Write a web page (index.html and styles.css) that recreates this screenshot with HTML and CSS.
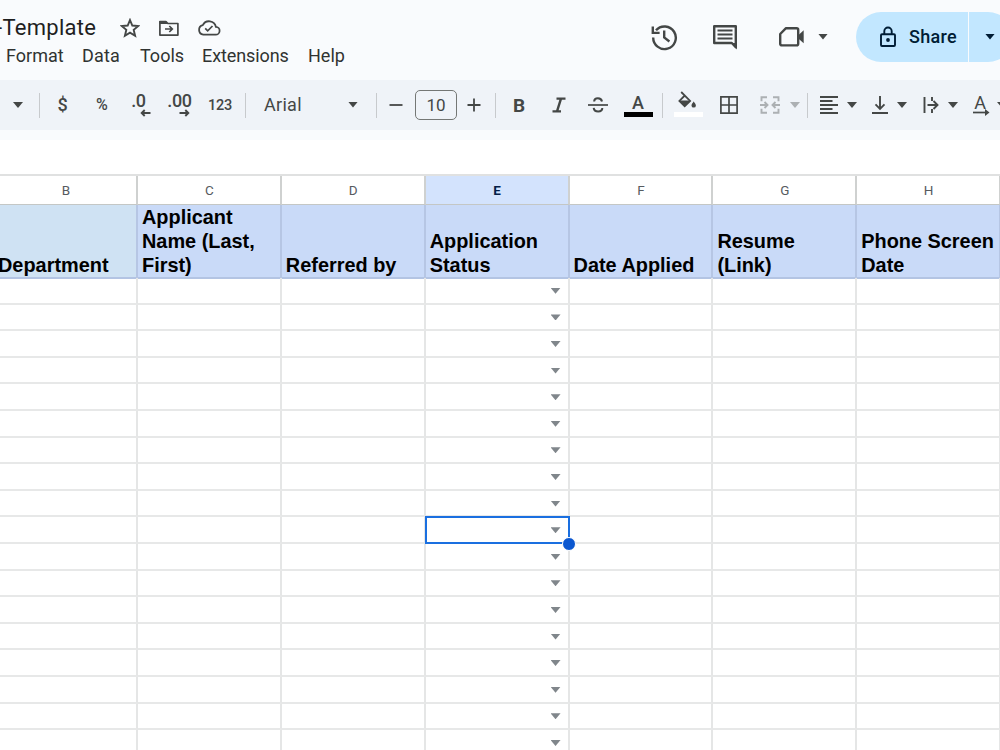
FILE: index.html
```html
<!DOCTYPE html>
<html lang="en">
<head>
<meta charset="utf-8">
<title>Template</title>
<link rel="stylesheet" href="styles.css">
</head>
<body>
<header class="top">
  <div class="doc">
    <div class="title-row">
      <span class="title">-Template</span>
      <svg class="ic star" width="20" height="20" viewBox="0 0 20 20"><path d="M10 2l2.300 5.500 6 .5-4.600 3.900 1.400 5.800L10 14.600l-5.100 3.100 1.400-5.800L1.700 8l6-.5z" fill="none" stroke="#444746" stroke-width="1.900"/></svg>
      <svg class="ic folder" width="22" height="18" viewBox="0 0 22 18"><path d="M1.900 2.500h6l2 2h10v11.600h-18z" fill="none" stroke="#444746" stroke-width="1.700" stroke-linejoin="round"/><path d="M1.500 2h6.500l2 3H1.500z" fill="#444746"/><path d="M7 10h7M11.300 7l3 3-3 3" fill="none" stroke="#444746" stroke-width="1.700"/></svg>
      <svg class="ic cloud" width="24" height="18" viewBox="0 0 24 18"><path d="M6.300 15.700h12.200a3.900 3.900 0 0 0 .4-7.800A7 7 0 0 0 5.800 6.100a4.900 4.900 0 0 0 .5 9.600z" fill="none" stroke="#444746" stroke-width="1.800"/><path d="M8.200 9.300l2.500 2.500 4.800-4.800" fill="none" stroke="#444746" stroke-width="1.700"/></svg>
    </div>
    <nav class="menu"><span class="m-format">Format</span><span class="m-data">Data</span><span class="m-tools">Tools</span><span class="m-ext">Extensions</span><span class="m-help">Help</span></nav>
  </div>
  <div class="actions">
    <svg class="history" width="28" height="28" viewBox="0 0 28 28"><path d="M3.200 14.500A11.300 11.300 0 1 0 6 7.300" fill="none" stroke="#444746" stroke-width="2.400"/><path d="M2.800 3.500v6.400h6.800" fill="none" stroke="#444746" stroke-width="2.400"/><path d="M14.200 7.500v7l5.200 4" fill="none" stroke="#444746" stroke-width="2.400"/></svg>
    <svg class="comment" width="28" height="28" viewBox="0 0 28 28"><path d="M3.200 3.200h21.600v21l-4-4.200H3.200z" fill="none" stroke="#444746" stroke-width="2.400" stroke-linejoin="round"/><path d="M20 20h5.900v6.500z" fill="#444746"/><path d="M6.500 7.500h15M6.500 11.500h15M6.500 15.500h15" stroke="#444746" stroke-width="2.200"/></svg>
    <svg class="video" width="28" height="24" viewBox="0 0 28 24"><path d="M8 3.200h10.600q1.600 0 1.600 1.600v14q0 1.600-1.600 1.600H4q-1.800 0-1.800-1.600V9z" fill="none" stroke="#444746" stroke-width="2.400" stroke-linejoin="round"/><path d="M20 10.500l5.700-5.200v13L20 13.200z" fill="#444746"/></svg>
    <i class="arrow v-arrow"></i>
    <div class="share">
      <div class="share-main">
        <svg width="18" height="22" viewBox="0 0 18 22"><rect x="2" y="8.300" width="14" height="11.700" rx="1" fill="none" stroke="#001d35" stroke-width="1.900"/><path d="M5.300 8V5.200a3.700 3.700 0 0 1 7.400 0V8" fill="none" stroke="#001d35" stroke-width="1.900"/><circle cx="9" cy="14" r="1.900" fill="#001d35"/></svg>
        <span>Share</span>
      </div>
      <div class="share-more"><i class="arrow dark"></i></div>
    </div>
  </div>
</header>
<div class="toolbar">
  <div class="t w-first"><i class="arrow"></i></div>
  <b class="sep"></b>
  <div class="t w-dollar">$</div>
  <div class="t w-pct">%</div>
  <div class="t w-dec"><span class="dec">.0</span><svg class="dec-arrow" width="11" height="8" viewBox="0 0 11 8"><path d="M10.500 4H2M4.700 1L1.700 4l3 3" fill="none" stroke="#444746" stroke-width="1.900"/></svg></div>
  <div class="t w-inc"><span class="dec">.00</span><svg class="dec-arrow" width="11" height="8" viewBox="0 0 11 8"><path d="M.5 4H9M6.300 1l3 3-3 3" fill="none" stroke="#444746" stroke-width="1.900"/></svg></div>
  <div class="t w-123">123</div>
  <b class="sep"></b>
  <div class="t w-font"><span>Arial</span><i class="arrow"></i></div>
  <b class="sep"></b>
  <div class="t w-minus"><svg width="14" height="14" viewBox="0 0 14 14"><path d="M.5 7h13" stroke="#444746" stroke-width="1.800"/></svg></div>
  <div class="size">10</div>
  <div class="t w-plus"><svg width="14" height="14" viewBox="0 0 14 14"><path d="M.5 7h13M7 .5v13" stroke="#444746" stroke-width="1.800"/></svg></div>
  <b class="sep"></b>
  <div class="t w-bold">B</div>
  <div class="t w-ital"><svg width="14" height="16" viewBox="0 0 14 16"><path d="M4.500 1.600h9M.5 14.400h8.500M9 1.600L5 14.400" fill="none" stroke="#444746" stroke-width="2.400"/></svg></div>
  <div class="t w-strike"><svg width="20" height="18" viewBox="0 0 20 18"><path d="M0 9h20" stroke="#444746" stroke-width="1.700"/><path d="M14 5.500C13.200 1.200 6.500 1 6.100 5.500M5.700 11.800c.5 4.900 8.600 4.700 8.600.2" fill="none" stroke="#444746" stroke-width="2"/></svg></div>
  <div class="t w-color"><span class="letter">A</span><span class="swatch black"></span></div>
  <b class="sep"></b>
  <div class="t w-fill"><svg width="30" height="22" viewBox="0 0 30 22"><path d="M8.200 2l8.900 8.900-5.400 5.300-5.300-5.300 5.400-5.400" fill="none" stroke="#444746" stroke-width="1.800"/><path d="M6 10.500h11.500l-5.800 6z" fill="#444746"/><path d="M20.700 11.500s-2.200 2.600-2.200 3.900a2.200 2.200 0 0 0 4.400 0c0-1.300-2.200-3.900-2.200-3.900z" fill="#444746"/></svg><span class="swatch white"></span></div>
  <div class="t w-border"><svg width="20" height="20" viewBox="0 0 20 20"><path d="M1.900 1.900h16.200v16.200H1.900zM10 2v16M2 10h16" fill="none" stroke="#444746" stroke-width="1.700"/></svg></div>
  <div class="t w-merge"><svg width="20" height="18" viewBox="0 0 20 18"><path d="M7 1.200H1.500v4M1.500 12.800v4H7M13 1.200h5.500v4M18.500 12.800v4H13M0 9h7M4.500 6l3 3-3 3M20 9h-7M15.500 6l-3 3 3 3" fill="none" stroke="#acb0b3" stroke-width="1.900"/></svg><i class="arrow off"></i></div>
  <b class="sep"></b>
  <div class="t w-align"><svg width="18" height="20" viewBox="0 0 18 20"><path d="M0 2h18M0 6h12.500M0 10h18M0 14h12.500M0 18h18" stroke="#444746" stroke-width="1.800"/></svg><i class="arrow"></i></div>
  <div class="t w-valign"><svg width="16" height="20" viewBox="0 0 16 20"><path d="M0 18h16M8 1v12.500M3.500 9.300L8 13.800l4.500-4.500" fill="none" stroke="#444746" stroke-width="1.900"/></svg><i class="arrow"></i></div>
  <div class="t w-wrap"><svg width="16" height="18" viewBox="0 0 16 18"><path d="M1.500 1v16M9 1v4M9 13v4M4.500 9H14M10.500 5l4 4-4 4" fill="none" stroke="#444746" stroke-width="1.900"/></svg><i class="arrow"></i></div>
  <div class="t w-rotate"><span class="letter">A</span><svg width="17" height="7" viewBox="0 0 17 7"><path d="M0 3.500h14" stroke="#444746" stroke-width="1.700"/><path d="M12 0l4.500 3.500L12 7z" fill="#444746"/></svg></div>
  <i class="arrow last"></i>
</div>
<div class="band"></div>
<main class="sheet">
  <div class="cols"><div>B</div><div>C</div><div>D</div><div class="sel">E</div><div>F</div><div>G</div><div>H</div></div>
  <div class="heads">
    <div class="dept">Department</div><div>Applicant<br>Name (Last,<br>First)</div><div>Referred by</div><div>Application<br>Status</div><div>Date Applied</div><div>Resume<br>(Link)</div><div>Phone Screen<br>Date</div>
  </div>
  <div class="rows" id="rows"></div>
</main>
<script src="sheet.js"></script>
</body>
</html>
```
FILE: styles.css
```css
* { box-sizing: border-box; }
body { margin: 0; width: 1000px; height: 750px; overflow: hidden; background: #fff; font-family: Roboto, "Liberation Sans", sans-serif; color: #444746; }
svg { display: block; flex: none; }
.top { height: 80px; background: #f9fbfd; display: flex; justify-content: space-between; overflow: hidden; }
.doc { padding-top: 13px; }
.title-row { display: flex; align-items: center; height: 30px; }
.title { width: 120px; margin-left: -4px; font-size: 22px; line-height: 30px; color: #1f1f1f; letter-spacing: .3px; white-space: nowrap; flex: none; }
.star { margin-left: 4px; }
.folder { margin-left: 18px; }
.cloud { margin-left: 17px; }
.menu { display: flex; font-size: 18px; line-height: 24px; color: #303331; padding: 1px 0 0 6px; }
.menu span { flex: none; white-space: nowrap; }
.m-format { width: 76px; }
.m-data { width: 58px; letter-spacing: .2px; }
.m-tools { width: 62px; }
.m-ext { width: 106px; letter-spacing: -.1px; }
.actions { display: flex; align-items: center; height: 73px; width: 350px; flex: none; }
.comment { margin-left: 33px; }
.video { margin-left: 39px; }
.arrow { flex: none; width: 10px; height: 6px; background: #444746; clip-path: polygon(0 0, 100% 0, 50% 100%); }
.v-arrow { margin-left: 12px; }
.share { display: flex; height: 50px; width: 170px; flex: none; margin-left: 28px; color: #001d35; }
.share-main { display: flex; align-items: center; width: 112px; background: #c2e7ff; border-radius: 25px 0 0 25px; padding-left: 23px; gap: 12px; font-size: 18px; font-weight: 500; letter-spacing: .3px; }
.share-more { display: flex; align-items: center; width: 44px; margin-left: 1px; background: #c2e7ff; border-radius: 0 25px 25px 0; padding-left: 16px; }
.dark { background: #001d35; }
.toolbar { height: 50px; background: #eff3f8; display: flex; align-items: center; overflow: hidden; font-size: 16px; font-weight: 500; }
.t { flex: none; height: 50px; display: flex; align-items: center; justify-content: center; }
.sep { flex: none; width: 1px; height: 25px; background: #c7cacd; margin-top: 1px; }
.w-first { width: 39px; padding-right: 3px; }
.w-dollar { width: 45px; font-size: 18px; padding-bottom: 1px; }
.w-pct { width: 34px; padding-bottom: 1px; }
.w-dec { width: 44px; flex-direction: column; padding-right: 5px; }
.w-inc { width: 36px; flex-direction: column; padding-right: 3px; }
.dec { font-size: 18px; line-height: 16px; height: 15px; letter-spacing: -.3px; }
.w-dec .dec-arrow { margin-left: 14px; }
.w-inc .dec-arrow { margin-left: 10px; }
.dec-arrow { margin-top: 1px; }
.w-123 { width: 46px; font-size: 14.500px; justify-content: flex-start; padding-left: 9px; letter-spacing: -.3px; }
.w-font { width: 130px; padding: 0 18px 1px; justify-content: space-between; font-size: 18px; font-weight: 400; letter-spacing: .3px; }
.w-minus { width: 38px; }
.size { flex: none; width: 42px; height: 30px; border: 1px solid #747775; border-radius: 5px; display: flex; align-items: center; justify-content: center; font-size: 17px; font-weight: 400; }
.w-plus { width: 38px; padding-right: 4px; }
.w-bold { width: 45px; font-size: 19px; font-weight: 700; padding: 1px 0 0 1px; }
.w-ital { width: 34px; padding-left: 1px; }
.w-strike { width: 43px; padding-left: 2px; }
.w-color { width: 44px; flex-direction: column; padding: 13px 4px 0 0; justify-content: flex-start; }
.letter { font-size: 18px; line-height: 19px; height: 19px; }
.swatch { width: 29px; height: 5px; }
.black { background: #000; }
.white { background: #fff; }
.w-fill { width: 50px; flex-direction: column; padding-top: 10px; justify-content: flex-start; }
.w-border { width: 32px; }
.w-merge { width: 62px; justify-content: flex-end; gap: 10px; padding-right: 7px; }
.off { background: #acb0b3; }
.w-align { width: 50px; gap: 9px; justify-content: flex-end; padding-right: 1px; }
.w-valign { width: 49px; gap: 9px; justify-content: flex-end; }
.w-wrap { width: 51px; gap: 9px; justify-content: flex-end; }
.w-rotate { width: 32px; margin-left: 7px; flex-direction: column; padding-top: 14px; justify-content: flex-start; }
.w-rotate .letter { height: 15px; line-height: 18px; padding-right: 2px; font-weight: 400; }
.band { height: 10px; background: #f9fbfd; }
.sheet { padding-top: 34px; }
.cols, .heads, .row { display: grid; grid-template-columns: 138px repeat(6, 143.850px); }
.cols > div, .row > div { border-right: 2px solid #e5e6e6; }
.cols { height: 31px; border-top: 2px solid #e0e1e1; }
.cols > div { border-right-color: #cfd1d0; border-bottom: 1px solid #c4c7c5; display: flex; align-items: center; justify-content: center; padding: 0 0 1px 1px; font-size: 13.500px; color: #575b5f; }
.cols > div:first-child { padding-right: 5px; }
.cols .sel { background: #d3e3fd; color: #041e49; font-weight: 700; }
.heads { height: 73px; }
.heads > div { display: flex; align-items: flex-end; background: #c9daf8; border-right: 2px solid #b6c6e4; border-bottom: 2px solid #b3c4e3; font: bold 19.900px/24px "Liberation Sans", Arial, sans-serif; color: #000; padding-left: 4px; white-space: nowrap; }
.heads .dept { background: #cfe2f3; padding-left: 0; margin-left: -2px; }
.row { height: 26.600px; }
.row > div { border-bottom: 2px solid #e7e8e8; }
.status { position: relative; display: flex; align-items: center; justify-content: flex-end; padding: 1px 7px 0 0; }
.status .arrow { background: #80868b; }
.active::before { content: ""; position: absolute; inset: -1px -2px -2px -1px; border: 2px solid #1a6fe0; }
.active::after { content: ""; position: absolute; right: -8px; bottom: -9px; width: 12px; height: 12px; border: 1px solid #fff; border-radius: 50%; background: #0b57d0; z-index: 2; }
```
FILE: sheet.js
```javascript
const rows = document.getElementById("rows");
for (let r = 0; r < 18; r++) {
  const row = document.createElement("div");
  row.className = "row";
  for (let c = 0; c < 7; c++) {
    const cell = document.createElement("div");
    if (c === 3) {
      cell.className = r === 9 ? "status active" : "status";
      const arrow = document.createElement("i");
      arrow.className = "arrow";
      cell.append(arrow);
    }
    row.append(cell);
  }
  rows.append(row);
}
```
